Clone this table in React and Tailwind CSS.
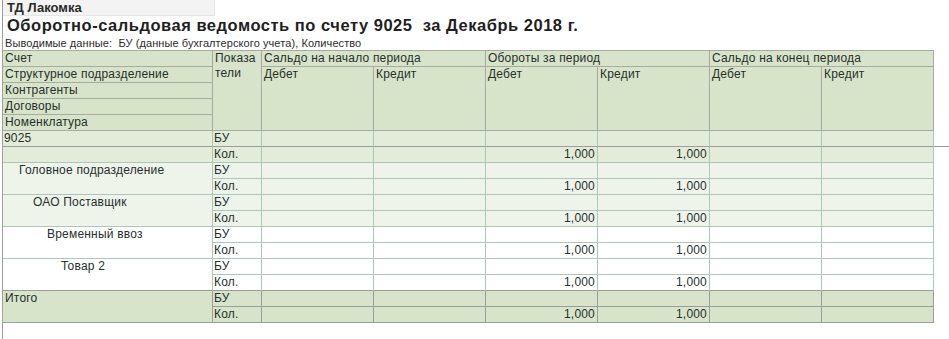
import React from 'react';
import clsx from 'clsx';

const HB = 'border-[#a3aba3]';
const TB = 'border-[#a9c8bc]';
const GB = 'border-[#9c9c9c]';

const groups = [
  { label: '9025', pad: 'pl-[1px]', bg: 'bg-[#e3ecd9]', top: true },
  { label: 'Головное подразделение', pad: 'pl-[16px]', bg: 'bg-[#eff4eb]' },
  { label: 'ОАО Поставщик', pad: 'pl-[30px]', bg: 'bg-[#eff4eb]' },
  { label: 'Временный ввоз', pad: 'pl-[44px]', bg: 'bg-white' },
  { label: 'Товар 2', pad: 'pl-[58px]', bg: 'bg-white', last: true },
];

const qty = ['', '', '1,000', '1,000', '', ''];

const Cell = ({ children, className }) => (
  <div className={clsx('border-r border-b overflow-hidden whitespace-nowrap leading-[15px]', className)}>
    {children}
  </div>
);

const HeaderCell = ({ children, className }) => (
  <Cell className={clsx('bg-[#d7e4ca] px-[2px]', HB, className)}>{children}</Cell>
);

function ValueRow({ name, values, bg, border, spacer }) {
  return (
    <>
      <Cell className={clsx('px-[1px]', bg, border)}>{name}</Cell>
      {values.map((v, i) => (
        <Cell key={i} className={clsx('text-right pr-[2px]', bg, border)}>
          {v}
        </Cell>
      ))}
      <div className={spacer ? 'border-b border-[#9c9c9c]' : ''} />
    </>
  );
}

function Group({ g }) {
  const lastB = g.last ? GB : TB;
  if (g.top) {
    return (
      <>
        <Cell className={clsx(g.bg, g.pad, GB, 'border-r-[#a9c8bc]')}>{g.label}</Cell>
        <ValueRow name="БУ" values={['', '', '', '', '', '']} bg={g.bg} border={clsx(GB, 'border-r-[#a9c8bc]')} spacer />
        <Cell className={clsx(g.bg, TB)} />
        <ValueRow name="Кол." values={qty} bg={g.bg} border={TB} />
      </>
    );
  }
  return (
    <>
      <Cell className={clsx('row-span-2', g.bg, g.pad, lastB, g.last && 'border-r-[#a9c8bc]')}>{g.label}</Cell>
      <ValueRow name="БУ" values={['', '', '', '', '', '']} bg={g.bg} border={TB} />
      <ValueRow
        name="Кол."
        values={qty}
        bg={g.bg}
        border={g.last ? clsx(GB, 'border-r-[#a9c8bc]') : TB}
      />
    </>
  );
}

export default function App() {
  return (
    <div className="w-[949px] h-[339px] overflow-hidden bg-white text-[#25302b] font-['Liberation_Sans',Arial,sans-serif]">
      <div className="ml-[2px] h-full border-l border-[#a0a0a0]">
        <div className="w-[212px] h-[16px] bg-[#f3f3f3] border-r border-b border-[#e6e6e6] pl-[4px] text-[13px] font-bold leading-[15px] text-[#2a2a2a]">
          ТД Лакомка
        </div>
        <div className="h-[18px] pl-[4px] text-[16.5px] font-bold leading-[18px] tracking-[0.52px] whitespace-pre text-[#1f1f1f]">
          {'Оборотно-сальдовая ведомость по счету 9025  за Декабрь 2018 г.'}
        </div>
        <div className="mt-[2px] h-[14px] pl-[2px] text-[11px] leading-[14px] tracking-[0.08px] whitespace-pre text-[#2b2b2b]">
          {'Выводимые данные:  БУ (данные бухгалтерского учета), Количество'}
        </div>

        {/* шапка */}
        <div className="grid w-[931px] grid-cols-[210px_49px_repeat(6,112px)] auto-rows-[16px] border-t border-[#a3aba3] text-[12px] tracking-[0.2px]">
          <HeaderCell>Счет</HeaderCell>
          <HeaderCell className="row-span-5">
            Показа
            <br />
            тели
          </HeaderCell>
          <HeaderCell className="col-span-2">Сальдо на начало периода</HeaderCell>
          <HeaderCell className="col-span-2">Обороты за период</HeaderCell>
          <HeaderCell className="col-span-2">Сальдо на конец периода</HeaderCell>
          <HeaderCell>Структурное подразделение</HeaderCell>
          <HeaderCell className="row-span-4">Дебет</HeaderCell>
          <HeaderCell className="row-span-4">Кредит</HeaderCell>
          <HeaderCell className="row-span-4">Дебет</HeaderCell>
          <HeaderCell className="row-span-4">Кредит</HeaderCell>
          <HeaderCell className="row-span-4">Дебет</HeaderCell>
          <HeaderCell className="row-span-4">Кредит</HeaderCell>
          <HeaderCell>Контрагенты</HeaderCell>
          <HeaderCell>Договоры</HeaderCell>
          <HeaderCell>Номенклатура</HeaderCell>
        </div>

        {/* данные */}
        <div className="grid w-[946px] grid-cols-[210px_49px_repeat(6,112px)_15px] auto-rows-[16px] text-[12px] tracking-[0.2px]">
          {groups.map((g) => (
            <Group key={g.label} g={g} />
          ))}
          <Cell className={clsx('row-span-2 bg-[#d7e4ca] pl-[2px]', GB)}>Итого</Cell>
          <ValueRow name="БУ" values={['', '', '', '', '', '']} bg="bg-[#d7e4ca]" border={GB} />
          <ValueRow name="Кол." values={qty} bg="bg-[#d7e4ca]" border={GB} />
        </div>
      </div>
    </div>
  );
}
